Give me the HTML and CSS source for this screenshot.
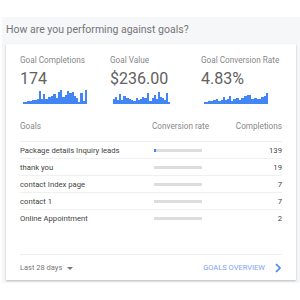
FILE: index.html
```html
<!DOCTYPE html>
<html lang="en">
<head>
  <meta charset="UTF-8">
  <title>Goals</title>
  <link rel="stylesheet" href="styles.css">
</head>
<body>
  <div class="panel">
    <h2 class="title">How are you performing against goals?</h2>
    <div class="card">
      <div class="metrics">
        <div class="metric">
          <div class="metric-label">Goal Completions</div>
          <div class="metric-value">174</div>
          <svg class="spark" width="66" height="16" viewBox="0 0 66 16">
            <path d="M0 16 V14 H4 V13 H9 V12 H14 V11 H16 V3 H18 V11 H20 V6 H22 V11 H25 V9 H28 V8 H30 V6 H33 V10 H35 V4 H37 V2 H39 V9 H42 V7 H44 V3 H46 V5 H49 V4 H51 V8 H53 V10 H55 V14 H57 V5 H60 V13 H62 V2 H64 V16 Z"/>
          </svg>
        </div>
        <div class="metric">
          <div class="metric-label">Goal Value</div>
          <div class="metric-value">$236.00</div>
          <svg class="spark" width="66" height="16" viewBox="0 0 66 16">
            <path d="M0 16 V11 H2 V9 H4 V12 H6 V6 H8 V12 H10 V8 H13 V10 H16 V11 H18 V12 H20 V13 H23 V10 H25 V12 H27 V11 H29 V9 H31 V10 H34 V5 H36 V13 H39 V10 H41 V7 H43 V11 H45 V4 H47 V9 H49 V10 H51 V12 H53 V5 H55 V14 H57 V16 Z"/>
          </svg>
        </div>
        <div class="metric">
          <div class="metric-label">Goal Conversion Rate</div>
          <div class="metric-value">4.83%</div>
          <svg class="spark" width="66" height="16" viewBox="0 0 66 16">
            <path d="M0 16 V14 H4 V13 H9 V12 H12 V11 H14 V13 H17 V12 H19 V9 H21 V12 H23 V11 H25 V8 H27 V13 H29 V11 H32 V10 H35 V12 H37 V10 H40 V8 H43 V7 H47 V11 H50 V10 H53 V11 H57 V9 H60 V8 H62 V5 H64 V16 Z"/>
          </svg>
        </div>
      </div>

      <div class="goals">
        <div class="goals-head">
          <span>Goals</span>
          <span>Conversion rate</span>
          <span class="num">Completions</span>
        </div>
        <div class="goal-row">
          <span>Package details Inquiry leads</span>
          <span class="rate"><i style="width: 2px"></i></span>
          <span class="num">139</span>
        </div>
        <div class="goal-row">
          <span>thank you</span>
          <span class="rate"><i style="width: 0"></i></span>
          <span class="num">19</span>
        </div>
        <div class="goal-row">
          <span>contact Index page</span>
          <span class="rate"><i style="width: 0"></i></span>
          <span class="num">7</span>
        </div>
        <div class="goal-row">
          <span>contact 1</span>
          <span class="rate"><i style="width: 0"></i></span>
          <span class="num">7</span>
        </div>
        <div class="goal-row">
          <span>Online Appointment</span>
          <span class="rate"><i style="width: 0"></i></span>
          <span class="num">2</span>
        </div>
      </div>

      <div class="card-footer">
        <span class="range">Last 28 days <span class="caret"></span></span>
        <a class="overview" href="#">GOALS OVERVIEW
          <svg width="8" height="10" viewBox="0 0 8 10"><path d="M2 1 L6 5 L2 9" fill="none" stroke="#4285f4" stroke-width="1.6"/></svg>
        </a>
      </div>
    </div>
  </div>
</body>
</html>
```

FILE: styles.css
```css
body {
  margin: 0;
  font-family: Roboto, "Liberation Sans", sans-serif;
  background-color: #fff;
}
.panel {
  margin: 17px 0 0 2px;
  background-color: #f6f7f9;
  padding: 0 4px 3px 4px;
}
.title {
  margin: 0;
  padding: 6px 0 0 0;
  height: 21px;
  font-size: 10.5px;
  font-weight: normal;
  color: #757575;
}
.card {
  background-color: #fff;
  box-shadow: 0 1px 2px rgba(0, 0, 0, 0.25);
  padding: 10px 14px 0 14px;
}
.metrics {
  display: grid;
  grid-template-columns: 90px 91px 1fr;
}
.metric-label {
  font-size: 8.2px;
  color: #888;
  line-height: 12px;
  white-space: nowrap;
}
.metric-value {
  font-size: 16px;
  color: #616161;
  line-height: 18px;
  margin-top: 4px;
}
.spark {
  display: block;
  margin: 0 0 0 3px;
}
.spark path {
  fill: #4285f4;
}
.goals {
  margin-top: 12px;
  font-size: 7.7px;
  color: #444;
}
.goals-head,
.goal-row {
  display: grid;
  grid-template-columns: 132px 1fr auto;
  align-items: center;
}
.goals-head {
  height: 19px;
  padding-bottom: 6px;
  color: #888;
  font-size: 8.2px;
  border-bottom: 1px solid #eee;
}
.goal-row {
  height: 16px;
  border-bottom: 1px solid #f0f0f0;
}
.goal-row:last-child {
  border-bottom: none;
}
.rate {
  display: block;
  width: 48px;
  height: 3px;
  margin-left: 2px;
  background-color: #ddd;
}
.rate i {
  display: block;
  height: 3px;
  background-color: #4285f4;
}
.num {
  text-align: right;
}
.card-footer {
  margin-top: 28px;
  border-top: 1px solid #eee;
  height: 25px;
  display: flex;
  justify-content: space-between;
  align-items: center;
  font-size: 7.5px;
}
.range {
  color: #777;
}
.caret {
  display: inline-block;
  margin-left: 3px;
  vertical-align: middle;
  border-left: 3px solid transparent;
  border-right: 3px solid transparent;
  border-top: 3px solid #777;
}
.overview {
  color: #7aa6ec;
  text-decoration: none;
  display: flex;
  align-items: center;
  gap: 9px;
}
```
